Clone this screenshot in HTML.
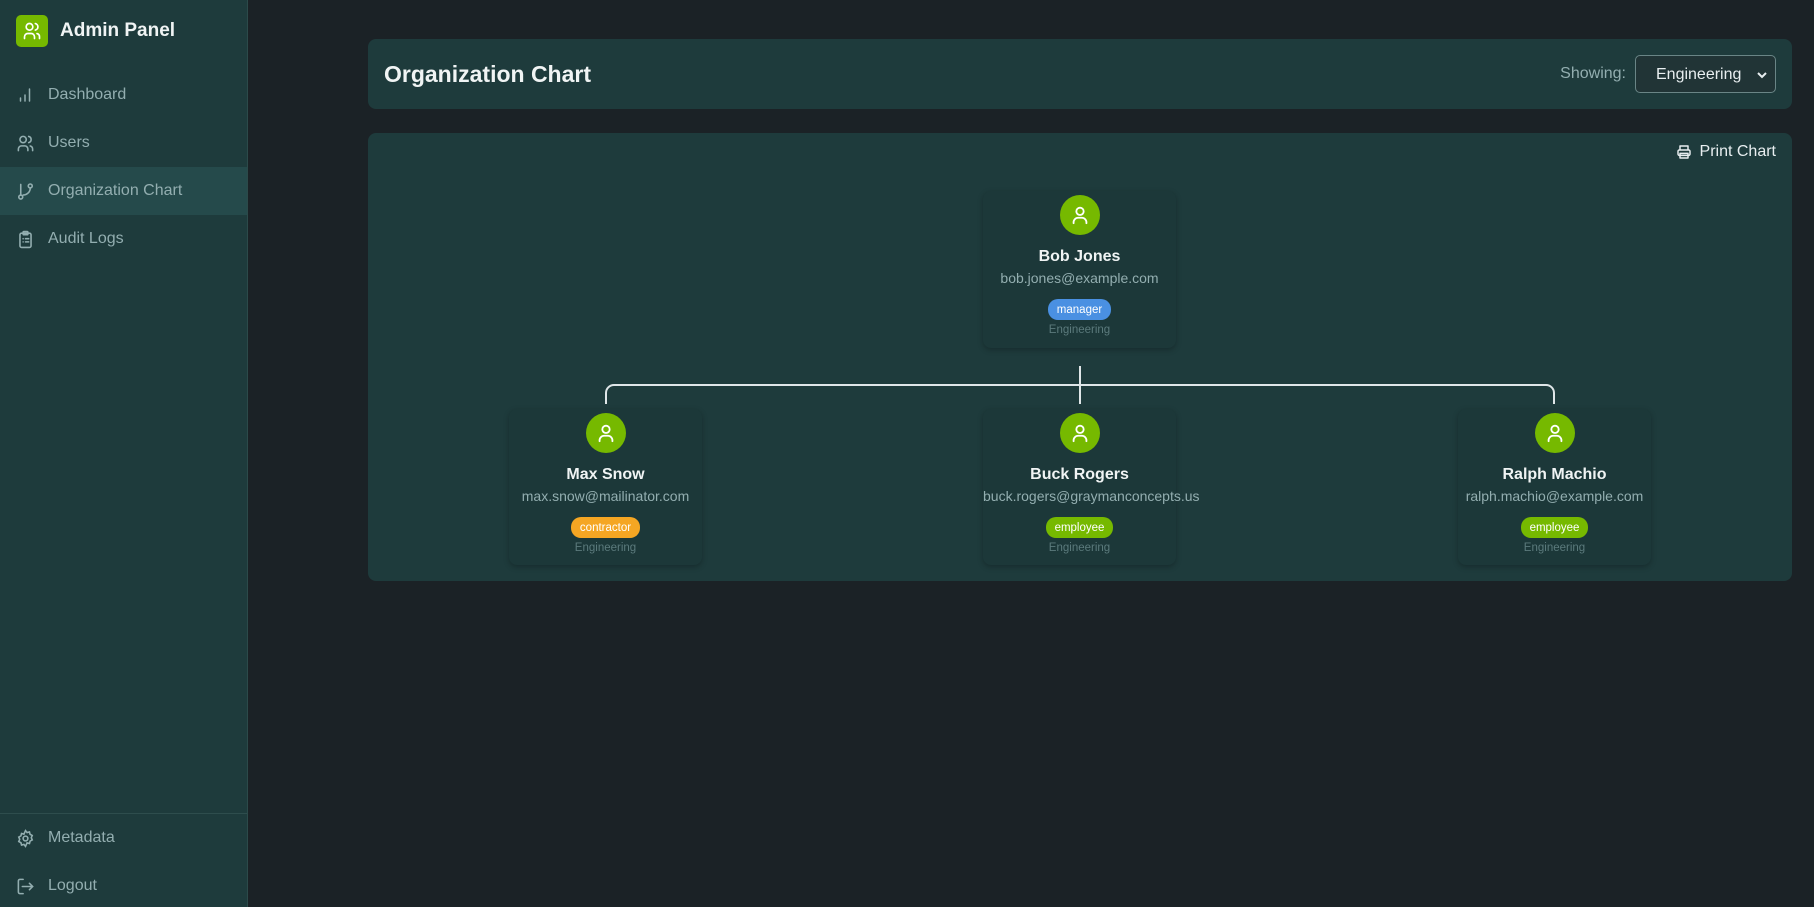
<!DOCTYPE html>
<html><head><meta charset="utf-8"><style>
*{box-sizing:border-box;margin:0;padding:0}
html,body{width:1814px;height:907px;overflow:hidden}
body{background:#1b2226;font-family:"Liberation Sans","DejaVu Sans",sans-serif;position:relative;color:#e8eef0}
.sb{position:absolute;left:0;top:0;width:248px;height:907px;background:#1e3b3c;border-right:1px solid #2c4a4a}
.logo{position:absolute;left:16px;top:15px;width:32px;height:32px;background:#76b900;border-radius:5px;display:flex;align-items:center;justify-content:center}
.brand{position:absolute;left:60px;top:20px;font-size:19px;font-weight:bold;color:#f0f4f4}
.nav{position:absolute;left:0;width:247px;height:48px;display:flex;align-items:center;font-size:16px;color:#93aeb0}
.nav svg{position:absolute;left:16px}
.nav span{position:absolute;left:48px}
.nav.act{background:#254a4b}
.div{position:absolute;left:0;top:813px;width:247px;border-top:1px solid #2e4d4d}
.card{position:absolute;background:#1e3b3c;border-radius:8px}
.title{position:absolute;left:16px;top:22px;font-size:23px;font-weight:bold;color:#f0f4f4}
.show{position:absolute;right:166px;top:26px;font-size:16px;color:#93aeb0}
.sel{position:absolute;right:16px;top:16px;width:141px;height:38px;border:1px solid #6a8586;border-radius:5px;background:#213436;color:#e8eef0;font-size:16px;padding:10px 0 0 20px}
.print{position:absolute;right:16px;top:10px;font-size:16px;color:#e8eef0;display:flex;align-items:center;gap:8px}
.p{position:absolute;width:193px;background:#1c3839;border-radius:8px;box-shadow:0 2px 6px rgba(0,0,0,.25);text-align:center}
.av{width:40px;height:40px;border-radius:50%;background:#76b900;margin:4px auto 0;display:flex;align-items:center;justify-content:center}
.nm{font-size:16px;font-weight:bold;color:#f0f4f4;margin-top:12px;line-height:20px}
.em{font-size:14px;color:#93aeb0;margin-top:2px;line-height:18px}
.bd{display:inline-flex;align-items:center;height:21px;font-size:11.5px;color:#fff;border-radius:10px;padding:0 9px;margin-top:12px}
.dp{font-size:11.5px;color:#5b7a7c;margin-top:4px}
</style></head><body>
<div class="sb">
<div class="logo"><svg width="20" height="20" viewBox="0 0 24 24" fill="none" stroke="#fff" stroke-width="2" stroke-linecap="round"><circle cx="9" cy="7" r="4"/><path d="M3 21v-2a4 4 0 0 1 4-4h4a4 4 0 0 1 4 4v2M16 3.1a4 4 0 0 1 0 7.8M21 21v-2a4 4 0 0 0-3-3.9"/></svg></div>
<div class="brand">Admin Panel</div>
<div class="nav" style="top:71px"><svg width="18" height="18" viewBox="0 0 24 24" fill="none" stroke="#93aeb0" stroke-width="2" stroke-linecap="round"><path d="M6 20v-4M12 20v-8M18 20V4"/></svg><span>Dashboard</span></div>
<div class="nav" style="top:119px"><svg width="19" height="19" viewBox="0 0 24 24" fill="none" stroke="#93aeb0" stroke-width="2" stroke-linecap="round"><circle cx="9" cy="7" r="4"/><path d="M3 21v-2a4 4 0 0 1 4-4h4a4 4 0 0 1 4 4v2M16 3.1a4 4 0 0 1 0 7.8M21 21v-2a4 4 0 0 0-3-3.9"/></svg><span>Users</span></div>
<div class="nav act" style="top:167px"><svg width="19" height="19" viewBox="0 0 24 24" fill="none" stroke="#93aeb0" stroke-width="2" stroke-linecap="round"><circle cx="6" cy="19" r="2.5"/><circle cx="18" cy="5" r="2.5"/><path d="M6 3v13.5M18 7.5a9 9 0 0 1-9 9"/></svg><span>Organization Chart</span></div>
<div class="nav" style="top:215px"><svg width="19" height="19" viewBox="0 0 24 24" fill="none" stroke="#93aeb0" stroke-width="2" stroke-linecap="round"><rect x="5" y="4" width="14" height="18" rx="2"/><rect x="9" y="2" width="6" height="4" rx="1"/><path d="M9 11h.01M12 11h4M9 15h.01M12 15h4"/></svg><span>Audit Logs</span></div>
<div class="div"></div>
<div class="nav" style="top:814px"><svg width="19" height="19" viewBox="0 0 24 24" fill="none" stroke="#93aeb0" stroke-width="2"><circle cx="12" cy="12" r="3"/><path d="M12 2l2 2.5 3-.8.8 3 2.7 1.5-1.2 2.8 1.2 2.8-2.7 1.5-.8 3-3-.8L12 22l-2-2.5-3 .8-.8-3-2.7-1.5L4.7 13 3.5 10.2 6.2 8.7l.8-3 3 .8z"/></svg><span>Metadata</span></div>
<div class="nav" style="top:862px"><svg width="19" height="19" viewBox="0 0 24 24" fill="none" stroke="#93aeb0" stroke-width="2" stroke-linecap="round"><path d="M9 3H5a2 2 0 0 0-2 2v14a2 2 0 0 0 2 2h4M15 12H8M17 8l4 4-4 4M21 12h-5"/></svg><span>Logout</span></div>
</div>

<div class="card" style="left:368px;top:39px;width:1424px;height:70px">
<div class="title">Organization Chart</div>
<div class="show">Showing:</div>
<div class="sel">Engineering<svg style="position:absolute;right:8px;top:15px" width="10" height="8" viewBox="0 0 10 8" fill="none" stroke="#e8eef0" stroke-width="2"><path d="M1 2l4 4 4-4"/></svg></div>
</div>

<div class="card" style="left:368px;top:133px;width:1424px;height:448px">
<div class="print"><svg width="16" height="16" viewBox="0 0 24 24" fill="none" stroke="#e8eef0" stroke-width="2.2" stroke-linejoin="round"><path d="M6 9V3h12v6"/><rect x="3" y="9" width="18" height="8" rx="2"/><rect x="6" y="14" width="12" height="7"/></svg>Print Chart</div>
</div>

<svg style="position:absolute;left:0;top:0" width="1814" height="907"><path d="M1080 366V404M606 404V393a8 8 0 0 1 8-8H1546a8 8 0 0 1 8 8V404" fill="none" stroke="#dfe6e8" stroke-width="2"/></svg>

<div class="p" style="left:983px;top:191px;height:157px">
<div class="av"><svg width="22" height="22" viewBox="0 0 24 24" fill="none" stroke="#fff" stroke-width="2" stroke-linecap="round"><circle cx="12" cy="8" r="4"/><path d="M5 21v-1a5 5 0 0 1 5-5h4a5 5 0 0 1 5 5v1"/></svg></div>
<div class="nm">Bob Jones</div><div class="em">bob.jones@example.com</div>
<span class="bd" style="background:#4a90e2">manager</span><div class="dp">Engineering</div></div>

<div class="p" style="left:509px;top:409px;height:156px">
<div class="av"><svg width="22" height="22" viewBox="0 0 24 24" fill="none" stroke="#fff" stroke-width="2" stroke-linecap="round"><circle cx="12" cy="8" r="4"/><path d="M5 21v-1a5 5 0 0 1 5-5h4a5 5 0 0 1 5 5v1"/></svg></div>
<div class="nm">Max Snow</div><div class="em">max.snow@mailinator.com</div>
<span class="bd" style="background:#f5a623">contractor</span><div class="dp">Engineering</div></div>

<div class="p" style="left:983px;top:409px;height:156px">
<div class="av"><svg width="22" height="22" viewBox="0 0 24 24" fill="none" stroke="#fff" stroke-width="2" stroke-linecap="round"><circle cx="12" cy="8" r="4"/><path d="M5 21v-1a5 5 0 0 1 5-5h4a5 5 0 0 1 5 5v1"/></svg></div>
<div class="nm">Buck Rogers</div><div class="em">buck.rogers@graymanconcepts.us</div>
<span class="bd" style="background:#76b900">employee</span><div class="dp">Engineering</div></div>

<div class="p" style="left:1458px;top:409px;height:156px">
<div class="av"><svg width="22" height="22" viewBox="0 0 24 24" fill="none" stroke="#fff" stroke-width="2" stroke-linecap="round"><circle cx="12" cy="8" r="4"/><path d="M5 21v-1a5 5 0 0 1 5-5h4a5 5 0 0 1 5 5v1"/></svg></div>
<div class="nm">Ralph Machio</div><div class="em">ralph.machio@example.com</div>
<span class="bd" style="background:#76b900">employee</span><div class="dp">Engineering</div></div>
</body></html>
